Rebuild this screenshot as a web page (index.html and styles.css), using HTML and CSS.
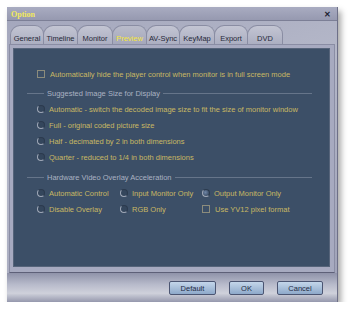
FILE: index.html
```html
<!doctype html>
<html lang="en">
  <head>
    <meta charset="utf-8" />
    <title>Option</title>
    <link rel="stylesheet" href="styles.css">
  </head>
  <body>
    <div class="window">
      <div class="titlebar">
        <span class="title">Option</span>
        <span class="close">&#10005;</span>
      </div>

      <!-- tab strip -->
      <div class="tabs">
        <div class="tab w34">General</div>
        <div class="tab w35">Timeline</div>
        <div class="tab w36">Monitor</div>
        <div class="tab w35 active">Preview</div>
        <div class="tab w34">AV-Sync</div>
        <div class="tab w36">KeyMap</div>
        <div class="tab w34">Export</div>
        <div class="tab w36">DVD</div>
      </div>

      <div class="frame">
        <div class="panel">
          <div class="row">
            <span class="check"></span>
            Automatically hide the player control when monitor is in full screen mode
          </div>

          <div class="group first">
            <span class="rule short"></span>
            <span class="group-title">Suggested Image Size for Display</span>
            <span class="rule"></span>
          </div>
          <div class="row"><span class="radio"></span>Automatic - switch the decoded image size to fit the size of monitor window</div>
          <div class="row"><span class="radio"></span>Full - original coded picture size</div>
          <div class="row"><span class="radio"></span>Half - decimated by 2 in both dimensions</div>
          <div class="row"><span class="radio"></span>Quarter - reduced to 1/4 in both dimensions</div>

          <div class="group">
            <span class="rule short"></span>
            <span class="group-title">Hardware Video Overlay Acceleration</span>
            <span class="rule"></span>
          </div>
          <div class="options">
            <div class="row"><span class="radio"></span>Automatic Control</div>
            <div class="row"><span class="radio"></span>Input Monitor Only</div>
            <div class="row"><span class="radio selected"></span>Output Monitor Only</div>
            <div class="row"><span class="radio"></span>Disable Overlay</div>
            <div class="row"><span class="radio"></span>RGB Only</div>
            <div class="row"><span class="check"></span>Use YV12 pixel format</div>
          </div>
        </div>
      </div>

      <div class="footer">
        <button class="btn default">Default</button>
        <button class="btn ok">OK</button>
        <button class="btn cancel">Cancel</button>
      </div>
    </div>
  </body>
</html>
```

FILE: styles.css
```css
body {
  margin: 0;
  background-color: #ffffff;
  font-family: "Liberation Sans", Arial, sans-serif;
  font-size: 7.5px;
}

.window {
  margin: 7px 0 0 7px;
  width: 331px;
  height: 295px;
  display: flex;
  flex-direction: column;
  background: linear-gradient(160deg, #a3a6bc, #b4b7c8 40%, #9ea1b7);
  box-shadow: 3px 4px 6px rgba(0, 0, 0, 0.35);
  border-right: 1px solid #6e7088;
  box-sizing: border-box;
}

.titlebar {
  height: 14px;
  display: flex;
  align-items: center;
  justify-content: space-between;
  padding: 2px 6px 0 4px;
  box-sizing: border-box;
  background: linear-gradient(#a9acc1, #9699b0);
  border-bottom: 1px solid #7c7f96;
}

.title {
  font-family: "Liberation Serif", "Times New Roman", serif;
  font-weight: bold;
  font-size: 8px;
  color: #f2ea5c;
}

.close {
  font-size: 8px;
  font-weight: bold;
  color: #202230;
}

.tabs {
  height: 25px;
  display: flex;
  align-items: flex-end;
  padding: 0 0 0 3px;
  margin-bottom: -2px;
}

.tab {
  height: 21px;
  box-sizing: border-box;
  display: flex;
  align-items: center;
  justify-content: center;
  padding-top: 4px;
  margin-right: -1px;
  border: 1px solid #8a8da3;
  border-bottom: none;
  border-radius: 10px 9px 0 0;
  background: linear-gradient(#c3c5d3, #a9acbf);
  color: #262838;
  font-size: 7.5px;
}

.tab.active {
  color: #f4e63a;
  background: linear-gradient(#b9bbca, #a2a5b9);
  z-index: 1;
}

.w34 { width: 34px; }
.w35 { width: 35px; }
.w36 { width: 36px; }

.frame {
  margin: 0 2px;
  padding: 3px 4px 5px 3px;
  background: #a7aac0;
  border: 1px solid #8a8da4;
  border-bottom: 1px solid #5e6078;
  height: 219px;
  position: relative;
  z-index: 2;
}

.panel {
  height: 100%;
  box-sizing: border-box;
  background-color: #3c4f67;
  border: 1px solid #56647a;
  padding: 17px 0 0 23px;
  color: #c8b864;
}

.row {
  height: 16px;
  display: flex;
  align-items: center;
  white-space: nowrap;
}

.check {
  width: 6px;
  height: 6px;
  border: 1px solid #8c8c7c;
  margin-right: 5px;
  flex-shrink: 0;
}

.radio {
  width: 6px;
  height: 6px;
  border-radius: 50%;
  border: 1px solid;
  border-color: #2c3b4e #2c3b4e #a1a9b8 #a1a9b8;
  background: #34465c;
  margin-right: 4px;
  flex-shrink: 0;
}

.radio.selected {
  background: radial-gradient(circle at 40% 40%, #6f86a6, #2a3a50);
}

.group {
  height: 16px;
  display: flex;
  align-items: center;
  margin: 4px 17px 0 -10px;
  color: #aab2c2;
}

.group.first {
  margin-top: 3px;
}

.rule {
  flex: 1;
  height: 1px;
  background: #66758a;
}

.rule.short {
  flex: none;
  width: 17px;
}

.group-title {
  padding: 0 3px;
}

.options {
  display: grid;
  grid-template-columns: 83px 82px auto;
}

.footer {
  flex: 1;
  display: flex;
  align-items: center;
  justify-content: flex-end;
  gap: 13px;
  padding: 1px 14px 0 0;
  background: linear-gradient(#8f92a9, #b8bbcb 40%, #cfd1db 70%, #9598ad);
}

.btn {
  height: 14px;
  padding: 0;
  border: 1px solid #4b5572;
  border-radius: 2px;
  background: linear-gradient(#c4d6ea, #8ea9ca);
  color: #1f2a44;
  font-family: "Liberation Sans", Arial, sans-serif;
  font-size: 7.5px;
}

.default { width: 47px; }
.ok { width: 35px; }
.cancel { width: 46px; }
```
